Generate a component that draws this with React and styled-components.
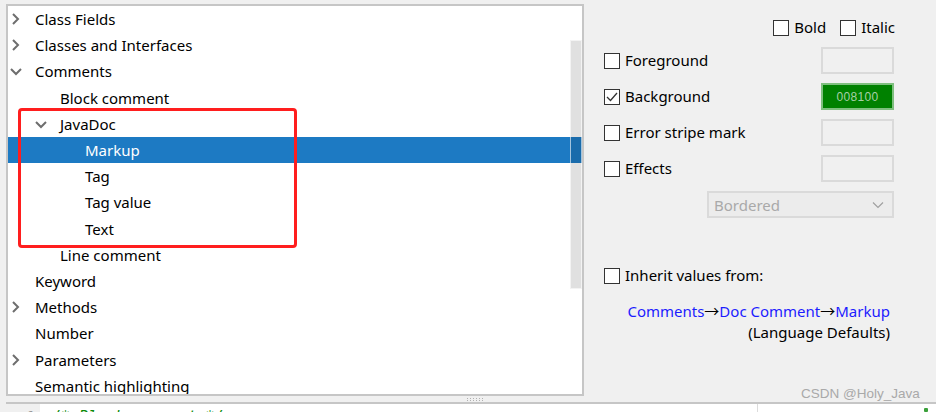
import React from "react";
import styled, { createGlobalStyle } from "styled-components";

const GlobalStyle = createGlobalStyle`
  html, body { margin: 0; padding: 0; background: #f0f0f0; }
  body { font-family: "Noto Sans", "Open Sans", sans-serif; color: #000; }
  * { box-sizing: border-box; }
`;

const Page = styled.div`
  position: relative;
  width: 936px;
  height: 412px;
  overflow: hidden;
  background: #f0f0f0;
  display: flex;
  flex-direction: column;
`;

const Top = styled.div`
  display: flex;
  height: 396px;
  flex: none;
`;

const TreePanel = styled.div`
  position: relative;
  margin: 4px 0 0 6px;
  width: 578px;
  height: 392px;
  border: 2px solid #c6c6c6;
  background: #fff;
  overflow: hidden;
`;

const TreeList = styled.div`
  display: flex;
  flex-direction: column;
`;

const Row = styled.div`
  height: 26.2px;
  flex: none;
  display: flex;
  align-items: center;
  padding-left: ${(p) => p.$level * 25}px;
  background: ${(p) => (p.$selected ? "#1d7ac3" : "transparent")};
  color: ${(p) => (p.$selected ? "#fff" : "#000")};
  font-size: 15px;
  white-space: nowrap;
`;

const ArrowSlot = styled.span`
  width: 27px;
  flex: none;
  display: flex;
  align-items: center;
  padding-left: 1px;
  color: #6e6e6e;
`;

const ScrollThumb = styled.div`
  position: absolute;
  right: 0;
  top: 34px;
  width: 12px;
  height: 249px;
  background: rgba(0, 0, 0, 0.12);
  border: 1px solid rgba(255, 255, 255, 0.6);
`;

const Highlight = styled.div`
  position: absolute;
  left: 10px;
  top: 102px;
  width: 279px;
  height: 140px;
  border: 3.5px solid #ff1e1e;
  border-radius: 4px;
  pointer-events: none;
`;

const Right = styled.div`
  flex: 1;
  display: flex;
  flex-direction: column;
  padding: 19px 42px 0 20px;
  font-size: 15px;
`;

const StyleRow = styled.div`
  display: flex;
  justify-content: flex-end;
  gap: 14px;
  height: 17px;
  margin-right: -1px;
`;

const CheckLabel = styled.label`
  display: flex;
  align-items: center;
  gap: 5px;
  line-height: 17px;
  white-space: nowrap;
`;

const Box = styled.span`
  width: 16px;
  height: 16px;
  flex: none;
  border: 1px solid #333;
  background: #fff;
  display: flex;
  align-items: center;
  justify-content: center;
`;

const Options = styled.div`
  display: flex;
  flex-direction: column;
  gap: 9px;
  margin-top: 11px;
`;

const OptionRow = styled.div`
  display: flex;
  align-items: center;
  justify-content: space-between;
  height: 27px;
`;

const Swatch = styled.div`
  width: 73px;
  height: 27px;
  border: 2px solid ${(p) => (p.$color ? "#7fbf7f" : "#dadada")};
  background: ${(p) => p.$color || "#f0f0f0"};
  color: #a6cfa6;
  font-family: "Liberation Sans", Arial, sans-serif;
  font-size: 12px;
  display: flex;
  align-items: center;
  justify-content: center;
  letter-spacing: 0.3px;
`;

const Select = styled.div`
  align-self: flex-end;
  width: 187px;
  height: 27px;
  border: 2px solid #dadada;
  background: #ececec;
  color: #a9a9a9;
  display: flex;
  align-items: center;
  justify-content: space-between;
  padding: 0 8px 0 5px;
  font-size: 15px;
`;

const InheritRow = styled.div`
  margin-top: 49px;
  display: flex;
`;

const Links = styled.div`
  margin-top: 16px;
  display: flex;
  flex-direction: column;
  align-items: flex-end;
  line-height: 21px;
  margin-right: 4px;
`;

const LinkLine = styled.div`
  color: #1c1cff;
  white-space: nowrap;
`;

const Arrow = styled.span`
  font-family: "Noto Sans CJK SC", sans-serif;
  color: #000;
  font-size: 15px;
`;

const Splitter = styled.div`
  height: 6px;
  flex: none;
  display: flex;
  justify-content: center;
  align-items: center;
  padding-left: 14px;
`;

const Editor = styled.div`
  flex: 1;
  margin-left: 6px;
  border-top: 2px solid #c6c6c6;
  background: #fff;
  display: flex;
  overflow: hidden;
`;

const Gutter = styled.div`
  width: 34px;
  background: #f0f0f0;
  color: #999;
  font-family: "DejaVu Sans Mono", monospace;
  font-size: 13px;
  text-align: right;
  padding: 4px 5px 0 0;
  line-height: 16px;
`;

const Code = styled.div`
  flex: 1;
  position: relative;
  padding: 5px 0 0 12px;
  color: #0b8a0b;
  font-family: "DejaVu Sans Mono", monospace;
  font-style: italic;
  font-size: 15px;
  line-height: 16px;
  white-space: pre;
`;

const Margin = styled.div`
  position: absolute;
  left: 717px;
  top: 0;
  bottom: 0;
  border-left: 1px solid #dcdcdc;
`;

const Mark = styled.div`
  position: absolute;
  right: 8px;
  top: 4px;
  width: 4px;
  height: 4px;
  background: #3aa03a;
  border-radius: 1px;
`;

const Watermark = styled.div`
  position: absolute;
  left: 801px;
  top: 386px;
  font-family: "Liberation Sans", Arial, sans-serif;
  font-size: 13.5px;
  color: #a9a9a9;
  white-space: nowrap;
`;

const Chevron = ({ dir }) => (
  <svg width="14" height="14" viewBox="0 0 14 14">
    <polyline
      points={dir === "down" ? "2,5 7,10 12,5" : "4,2 9,7 4,12"}
      fill="none"
      stroke="currentColor"
      strokeWidth="2"
    />
  </svg>
);

const CheckBox = ({ checked }) => (
  <Box>
    {checked && (
      <svg width="14" height="14" viewBox="0 0 14 14">
        <polyline points="2,7 5.5,10.5 12,3" fill="none" stroke="#333" strokeWidth="1.3" />
      </svg>
    )}
  </Box>
);

const tree = [
  { label: "Class Fields", level: 0, arrow: "right" },
  { label: "Classes and Interfaces", level: 0, arrow: "right" },
  { label: "Comments", level: 0, arrow: "down" },
  { label: "Block comment", level: 1 },
  { label: "JavaDoc", level: 1, arrow: "down" },
  { label: "Markup", level: 2, selected: true },
  { label: "Tag", level: 2 },
  { label: "Tag value", level: 2 },
  { label: "Text", level: 2 },
  { label: "Line comment", level: 1 },
  { label: "Keyword", level: 0 },
  { label: "Methods", level: 0, arrow: "right" },
  { label: "Number", level: 0 },
  { label: "Parameters", level: 0, arrow: "right" },
  { label: "Semantic highlighting", level: 0 },
];

const options = [
  { label: "Foreground" },
  { label: "Background", checked: true, color: "#008100", text: "008100" },
  { label: "Error stripe mark" },
  { label: "Effects" },
];

export default function App() {
  return (
    <>
      <GlobalStyle />
      <Page>
        <Top>
          <TreePanel>
            <TreeList>
              {tree.map((t) => (
                <Row key={t.label} $level={t.level} $selected={t.selected}>
                  <ArrowSlot>{t.arrow && <Chevron dir={t.arrow} />}</ArrowSlot>
                  {t.label}
                </Row>
              ))}
            </TreeList>
            <ScrollThumb />
            <Highlight />
          </TreePanel>
          <Right>
            <StyleRow>
              <CheckLabel>
                <CheckBox />
                Bold
              </CheckLabel>
              <CheckLabel>
                <CheckBox />
                Italic
              </CheckLabel>
            </StyleRow>
            <Options>
              {options.map((o) => (
                <OptionRow key={o.label}>
                  <CheckLabel>
                    <CheckBox checked={o.checked} />
                    {o.label}
                  </CheckLabel>
                  <Swatch $color={o.color}>{o.text}</Swatch>
                </OptionRow>
              ))}
              <Select>
                <span>Bordered</span>
                <svg width="12" height="8" viewBox="0 0 12 8">
                  <polyline points="1,1.5 6,6.5 11,1.5" fill="none" stroke="#a0a0a0" strokeWidth="1.2" />
                </svg>
              </Select>
            </Options>
            <InheritRow>
              <CheckLabel>
                <CheckBox />
                Inherit values from:
              </CheckLabel>
            </InheritRow>
            <Links>
              <LinkLine>
                Comments<Arrow>→</Arrow>Doc Comment<Arrow>→</Arrow>Markup
              </LinkLine>
              <div>(Language Defaults)</div>
            </Links>
          </Right>
        </Top>
        <Splitter>
          <svg width="16" height="3" viewBox="0 0 16 3">
            {[0, 3, 6, 9, 12, 15].map((x) => (
              <g key={x}>
                <rect x={x} y="0" width="1" height="1" fill="#b0b0b0" />
                <rect x={x} y="2" width="1" height="1" fill="#b0b0b0" />
              </g>
            ))}
          </svg>
        </Splitter>
        <Editor>
          <Gutter>1</Gutter>
          <Code>
            {"/* Block comment */"}
            <Margin />
            <Mark />
          </Code>
        </Editor>
        <Watermark>CSDN @Holy_Java</Watermark>
      </Page>
    </>
  );
}
